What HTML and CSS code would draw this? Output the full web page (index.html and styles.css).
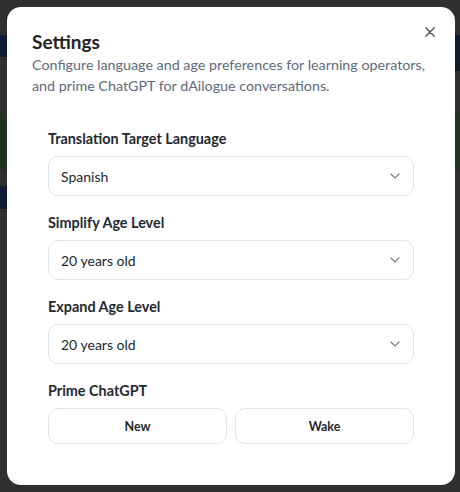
FILE: index.html
```html
<html>
<head>
<link rel="stylesheet" href="styles.css">
<title>Settings</title>
</head>
<body>
    <div class="backdrop">
        <div class="strip navy s1"></div>
        <div class="strip green s2"></div>
        <div class="strip navy s3"></div>
        <div class="strip navy s4"></div>
        <div class="strip green s5"></div>
    </div>
    <div class="modal">
        <button class="close" aria-label="Close">
            <svg width="10" height="10" viewBox="0 0 10 10"><path d="M0.8 0.8L9.2 9.2M9.2 0.8L0.8 9.2" stroke="#4b5259" stroke-width="1.4" stroke-linecap="round"/></svg>
        </button>
        <h2 class="title">Settings</h2>
        <p class="desc">Configure language and age preferences for learning operators, and prime ChatGPT for dAilogue conversations.</p>

        <form class="form">
            <label class="label">Translation Target Language</label>
            <div class="select">
                <span>Spanish</span>
                <svg width="10" height="10" viewBox="0 0 10 10"><path d="M1 3L5 7L9 3" fill="none" stroke="#80858c" stroke-width="1.3" stroke-linecap="round" stroke-linejoin="round"/></svg>
            </div>

            <label class="label">Simplify Age Level</label>
            <div class="select">
                <span>20 years old</span>
                <svg width="10" height="10" viewBox="0 0 10 10"><path d="M1 3L5 7L9 3" fill="none" stroke="#80858c" stroke-width="1.3" stroke-linecap="round" stroke-linejoin="round"/></svg>
            </div>

            <label class="label">Expand Age Level</label>
            <div class="select">
                <span>20 years old</span>
                <svg width="10" height="10" viewBox="0 0 10 10"><path d="M1 3L5 7L9 3" fill="none" stroke="#80858c" stroke-width="1.3" stroke-linecap="round" stroke-linejoin="round"/></svg>
            </div>

            <label class="label">Prime ChatGPT</label>
            <div class="buttons">
                <button type="button" class="btn">New</button>
                <button type="button" class="btn">Wake</button>
            </div>
        </form>
    </div>
</body>
</html>
```

FILE: styles.css
```css
body {
  margin: 0;
  width: 460px;
  height: 492px;
  background-color: #2f2f2f;
  font-family: Lato, "Noto Sans", sans-serif;
  position: relative;
  overflow: hidden;
}

.backdrop {
  position: absolute;
  inset: 0;
}

.strip {
  position: absolute;
}

.navy { background-color: #0f1a33; }
.green { background-color: #1f3320; }

.s1 { left: 0; top: 35px; width: 8px; height: 22px; }
.s2 { left: 0; top: 113px; width: 8px; height: 57px; }
.s3 { left: 0; top: 186px; width: 8px; height: 23px; }
.s4 { right: 0; top: 35px; width: 6px; height: 36px; }
.s5 { right: 0; top: 113px; width: 6px; height: 57px; }

.modal {
  position: absolute;
  left: 7px;
  top: 7px;
  width: 448px;
  height: 478px;
  box-sizing: border-box;
  background-color: #fff;
  border-radius: 14px;
  padding: 22px 25px;
}

.close {
  position: absolute;
  top: 15px;
  right: 15px;
  width: 20px;
  height: 20px;
  border: none;
  background: none;
  padding: 0;
  display: flex;
  align-items: center;
  justify-content: center;
}

.title {
  margin: 0;
  font-size: 19px;
  font-weight: 700;
  color: #1f2328;
  line-height: 25px;
}

.desc {
  margin: 0;
  font-size: 14.3px;
  line-height: 21px;
  color: #5f6b7a;
}

.form {
  margin: 33px 16px 0;
  display: flex;
  flex-direction: column;
}

.label {
  font-size: 14.4px;
  font-weight: 700;
  color: #24292f;
  line-height: 20px;
  margin-bottom: 7px;
}

.select {
  height: 40px;
  box-sizing: border-box;
  border: 1px solid #e3e6ea;
  border-radius: 10px;
  display: flex;
  align-items: center;
  justify-content: space-between;
  padding: 0 13px 0 12px;
  font-size: 14px;
  color: #24292f;
  margin-bottom: 17px;
}

.buttons {
  display: flex;
  gap: 8px;
}

.btn {
  flex: 1;
  height: 36px;
  background: #fff;
  border: 1px solid #e3e6ea;
  border-radius: 10px;
  font-family: Lato, "Noto Sans", sans-serif;
  font-size: 12.5px;
  font-weight: 700;
  color: #24292f;
}
```
